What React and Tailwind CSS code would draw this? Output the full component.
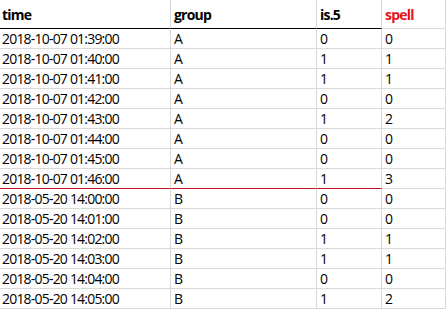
import React from 'react';

const rows = [
  ['2018-10-07 01:39:00', 'A', 0, 0],
  ['2018-10-07 01:40:00', 'A', 1, 1],
  ['2018-10-07 01:41:00', 'A', 1, 1],
  ['2018-10-07 01:42:00', 'A', 0, 0],
  ['2018-10-07 01:43:00', 'A', 1, 2],
  ['2018-10-07 01:44:00', 'A', 0, 0],
  ['2018-10-07 01:45:00', 'A', 0, 0],
  ['2018-10-07 01:46:00', 'A', 1, 3],
  ['2018-05-20 14:00:00', 'B', 0, 0],
  ['2018-05-20 14:01:00', 'B', 0, 0],
  ['2018-05-20 14:02:00', 'B', 1, 1],
  ['2018-05-20 14:03:00', 'B', 1, 1],
  ['2018-05-20 14:04:00', 'B', 0, 0],
  ['2018-05-20 14:05:00', 'B', 1, 2],
];

export default function App() {
  return (
    <div className="w-[448px] h-[311px] overflow-hidden bg-white text-black font-['Open_Sans',sans-serif] text-[14px] tracking-[-0.8px] leading-none">
      {/* cabecera */}
      <div className="flex h-[29px]">
        <div className="w-[171px] border-r border-[#d9d9d9] border-b border-b-black flex items-end pb-[6px] pl-[2px] font-bold">time</div>
        <div className="w-[146px] border-r border-[#d9d9d9] border-b border-b-black flex items-end pb-[6px] pl-[3px] font-bold">group</div>
        <div className="w-[65px] border-r border-[#d9d9d9] border-b border-b-black flex items-end pb-[6px] pl-[3px] font-bold">is.5</div>
        <div className="w-[64px] border-r border-[#d9d9d9] border-b border-b-[#d9d9d9] flex items-end pb-[6px] pl-[3px] font-bold text-[#e8121a]">spell</div>
      </div>
      {rows.map((r, i) => {
        const red = i === 7;
        const b = red ? 'border-b-[#c8101a]' : 'border-b-[#d9d9d9]';
        return (
          <div key={i} className="flex h-[20px]">
            <div className={`w-[171px] border-r border-[#d9d9d9] border-b ${b} flex items-center pl-[2px]`}>{r[0]}</div>
            <div className={`w-[146px] border-r border-[#d9d9d9] border-b ${b} flex items-center pl-[3px]`}>{r[1]}</div>
            <div className={`w-[65px] border-r border-[#d9d9d9] border-b ${b} flex items-center pl-[3px]`}>{r[2]}</div>
            <div className="w-[64px] border-r border-[#d9d9d9] border-b border-b-[#d9d9d9] flex items-center pl-[3px]">{r[3]}</div>
          </div>
        );
      })}
    </div>
  );
}
